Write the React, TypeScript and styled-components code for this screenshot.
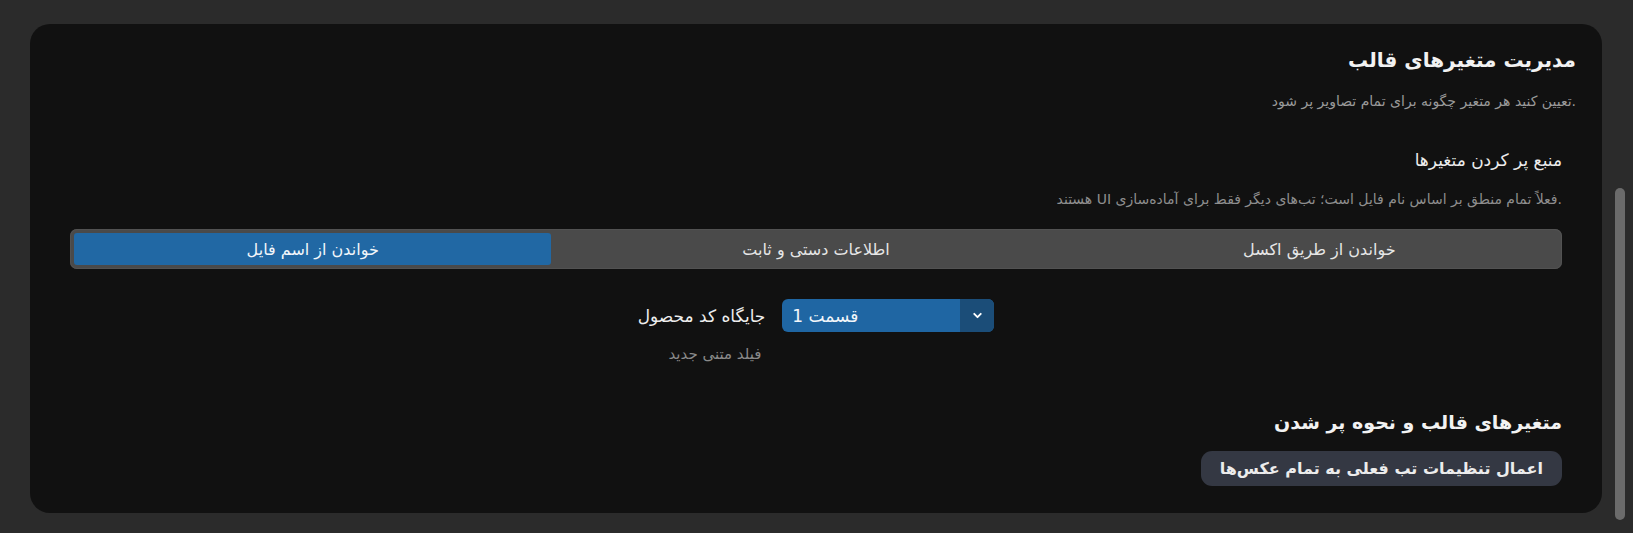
import React from "react";
import styled, { createGlobalStyle } from "styled-components";
import { ChevronDown } from "lucide-react";

const GlobalStyle = createGlobalStyle`
  html, body {
    margin: 0;
    padding: 0;
    background: #2b2b2b;
  }
  body {
    font-family: "DejaVu Sans", "Noto Sans", sans-serif;
    color: #eeeeee;
  }
`;

const tabs = [
  { key: "excel", label: "خواندن از طریق اکسل" },
  { key: "manual", label: "اطلاعات دستی و ثابت" },
  { key: "filename", label: "خواندن از اسم فایل" },
];

// Page shell: card + scrollbar column
const Shell = styled.div`
  display: flex;
  height: 533px;
  padding-left: 30px;
  box-sizing: border-box;
`;

const Card = styled.section`
  flex: 1;
  margin: 24px 0 20px;
  background: #111111;
  border-radius: 20px;
  padding: 22px 26px 0 40px;
  box-sizing: border-box;
  direction: rtl;
`;

const ScrollTrack = styled.div`
  width: 31px;
  display: flex;
  justify-content: center;
  padding: 188px 0 13px 5px;
  box-sizing: border-box;
`;

const ScrollThumb = styled.div`
  width: 10px;
  height: 100%;
  border-radius: 5px;
  background: #6b6b6b;
`;

const Title = styled.h1`
  margin: 0;
  font-size: 20px;
  font-weight: 700;
  line-height: 28px;
  color: #f2f2f2;
`;

const Subtitle = styled.p`
  margin: 17px 0 0;
  font-size: 14px;
  line-height: 20px;
  color: #9a9a9a;
`;

const Body = styled.div`
  padding-right: 14px;
`;

const SourceTitle = styled.h3`
  margin: 37px 0 0;
  font-size: 17px;
  font-weight: 400;
  line-height: 24px;
  color: #ececec;
`;

const Hint = styled.p`
  margin: 17px 0 0;
  font-size: 14px;
  line-height: 20px;
  color: #8e8e8e;
`;

const TabBar = styled.div`
  margin-top: 20px;
  height: 40px;
  display: flex;
  gap: 26px;
  padding: 4px;
  box-sizing: border-box;
  background: #4a4a4a;
  border-radius: 7px;
  box-shadow: inset 0 0 0 1px #525252;
`;

const Tab = styled.button<{ $active?: boolean }>`
  flex: 1;
  border: 0;
  border-radius: 3px;
  font-family: inherit;
  font-size: 16px;
  color: ${(p) => (p.$active ? "#f2f6fa" : "#e6e6e6")};
  background: ${(p) => (p.$active ? "#2168a4" : "transparent")};
  cursor: pointer;
`;

const FieldGrid = styled.div`
  direction: ltr;
  margin-top: 30px;
  display: grid;
  grid-template-columns: auto 212px;
  column-gap: 17px;
  row-gap: 12px;
  justify-content: center;
  align-items: center;
`;

const FieldLabel = styled.label`
  direction: rtl;
  text-align: right;
  font-size: 17px;
  line-height: 24px;
  color: #eeeeee;
`;

const FieldHelp = styled.span`
  direction: rtl;
  text-align: right;
  padding-right: 4px;
  font-size: 15px;
  line-height: 20px;
  color: #8a8a8a;
`;

const Select = styled.div`
  display: flex;
  height: 33px;
  border-radius: 6px;
  overflow: hidden;
  background: #1f66a3;
`;

const SelectValue = styled.span`
  flex: 1;
  display: flex;
  align-items: center;
  padding-left: 10px;
  font-size: 17px;
  color: #f2f6fa;
`;

const SelectArrow = styled.span`
  width: 34px;
  display: flex;
  align-items: center;
  justify-content: center;
  background: #1b4d78;
  color: #ffffff;
`;

const SectionTitle = styled.h2`
  margin: 45px 0 0;
  font-size: 19px;
  font-weight: 700;
  line-height: 26px;
  color: #f2f2f2;
`;

const ApplyButton = styled.button`
  margin-top: 16px;
  height: 35px;
  padding: 0 19px;
  border: 0;
  border-radius: 11px;
  background: #343843;
  color: #ececec;
  font-family: inherit;
  font-size: 16px;
  font-weight: 700;
  cursor: pointer;
`;

const App: React.FC = () => {
  const active = "filename";

  return (
    <>
      <GlobalStyle />
      <Shell>
        <Card>
          <Title>مدیریت متغیرهای قالب</Title>
          <Subtitle>.تعیین کنید هر متغیر چگونه برای تمام تصاویر پر شود</Subtitle>

          <Body>
            <SourceTitle>منبع پر کردن متغیرها</SourceTitle>
            <Hint>
              .فعلاً تمام منطق بر اساس نام فایل است؛ تب‌های دیگر فقط برای آماده‌سازی UI هستند
            </Hint>

            <TabBar>
              {tabs.map((t) => (
                <Tab key={t.key} $active={t.key === active}>
                  {t.label}
                </Tab>
              ))}
            </TabBar>

            <FieldGrid>
              <FieldLabel>جایگاه کد محصول</FieldLabel>
              <Select>
                <SelectValue>قسمت 1</SelectValue>
                <SelectArrow>
                  <ChevronDown size={13} strokeWidth={3.5} />
                </SelectArrow>
              </Select>
              <FieldHelp>فیلد متنی جدید</FieldHelp>
            </FieldGrid>

            <SectionTitle>متغیرهای قالب و نحوه پر شدن</SectionTitle>
            <ApplyButton>اعمال تنظیمات تب فعلی به تمام عکس‌ها</ApplyButton>
          </Body>
        </Card>
        <ScrollTrack>
          <ScrollThumb />
        </ScrollTrack>
      </Shell>
    </>
  );
};

export default App;
